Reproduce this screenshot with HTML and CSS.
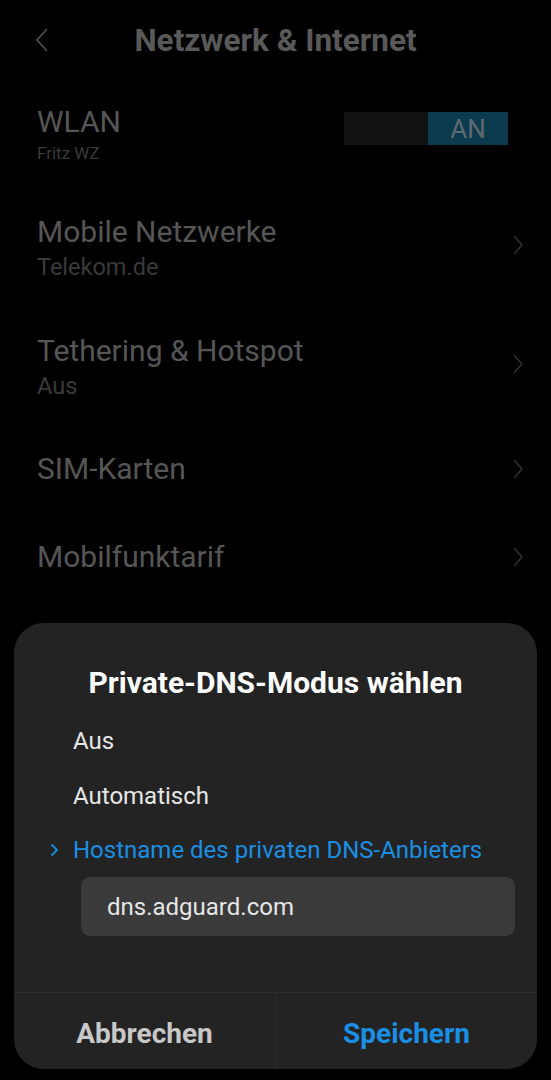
FILE: index.html
```html
<!DOCTYPE html>
<html>

<head>
    <title>Netzwerk &amp; Internet</title>
    <link rel="stylesheet" href="styles.css">
</head>

<body>
    <!-- Settings screen behind the dialog -->
    <header class="topbar">
        <svg class="back" width="14" height="24" viewBox="0 0 14 24">
            <path d="M12 1 L2 12 L12 23" fill="none" stroke="#555" stroke-width="1.6" />
        </svg>
        <h1 class="title">Netzwerk &amp; Internet</h1>
    </header>

    <ul class="settings">
        <li class="row row-wlan">
            <div class="labels">
                <span class="name">WLAN</span>
                <span class="sub small">Fritz WZ</span>
            </div>
            <div class="toggle">
                <span class="toggle-off"></span>
                <span class="toggle-on">AN</span>
            </div>
        </li>
        <li class="row row-mobile">
            <div class="labels">
                <span class="name">Mobile Netzwerke</span>
                <span class="sub">Telekom.de</span>
            </div>
            <svg class="chevron" width="10" height="20" viewBox="0 0 10 20">
                <path d="M1 1 L9 10 L1 19" fill="none" stroke="#333" stroke-width="1.4" />
            </svg>
        </li>
        <li class="row row-tether">
            <div class="labels">
                <span class="name">Tethering &amp; Hotspot</span>
                <span class="sub">Aus</span>
            </div>
            <svg class="chevron" width="10" height="20" viewBox="0 0 10 20">
                <path d="M1 1 L9 10 L1 19" fill="none" stroke="#333" stroke-width="1.4" />
            </svg>
        </li>
        <li class="row row-sim">
            <div class="labels">
                <span class="name">SIM-Karten</span>
            </div>
            <svg class="chevron" width="10" height="20" viewBox="0 0 10 20">
                <path d="M1 1 L9 10 L1 19" fill="none" stroke="#333" stroke-width="1.4" />
            </svg>
        </li>
        <li class="row row-tarif">
            <div class="labels">
                <span class="name">Mobilfunktarif</span>
            </div>
            <svg class="chevron" width="10" height="20" viewBox="0 0 10 20">
                <path d="M1 1 L9 10 L1 19" fill="none" stroke="#333" stroke-width="1.4" />
            </svg>
        </li>
    </ul>

    <!-- Bottom sheet dialog -->
    <div class="dialog">
        <h2 class="dialog-title">Private-DNS-Modus wählen</h2>
        <div class="options">
            <div class="option">Aus</div>
            <div class="option">Automatisch</div>
            <div class="option selected">
                <svg class="sel-mark" width="9" height="14" viewBox="0 0 9 14">
                    <path d="M1.5 1.5 L7 7 L1.5 12.5" fill="none" stroke="#1a8fe3" stroke-width="1.8" />
                </svg>
                Hostname des privaten DNS-Anbieters
            </div>
            <div class="host-input">dns.adguard.com</div>
        </div>
        <div class="actions">
            <button class="btn btn-cancel">Abbrechen</button>
            <button class="btn btn-save">Speichern</button>
        </div>
    </div>
</body>
</html>
```

FILE: styles.css
```css
html,
body {
    margin: 0;
    padding: 0;
}

body {
    width: 551px;
    height: 1080px;
    background: #000;
    font-family: Roboto, "Noto Sans", sans-serif;
    overflow: hidden;
    position: relative;
}

.topbar {
    height: 80px;
    display: flex;
    align-items: center;
    position: relative;
}

.back {
    position: absolute;
    left: 35px;
    top: 28px;
}

.title {
    margin: 0;
    width: 100%;
    text-align: center;
    font-size: 31.5px;
    font-weight: 700;
    color: #595959;
}

.settings {
    list-style: none;
    margin: 0;
    padding: 0;
}

.row {
    display: flex;
    align-items: center;
    justify-content: space-between;
    padding: 0 28px 0 37px;
}

.labels {
    display: flex;
    flex-direction: column;
}

.name {
    font-size: 30px;
    color: #565656;
    line-height: 36px;
}

.sub {
    font-size: 23.5px;
    color: #3a3a3a;
    line-height: 34px;
}

.sub.small {
    font-size: 17px;
    line-height: 26px;
}

.row-wlan {
    margin-top: 24px;
    padding-right: 43px;
    align-items: flex-start;
}

.row-mobile {
    margin-top: 48px;
}

.row-mobile .chevron,
.row-tether .chevron {
    margin-bottom: 8px;
}

.row-tether {
    margin-top: 49px;
}

.row-sim {
    margin-top: 48px;
}

.row-tarif {
    margin-top: 52px;
}

.toggle {
    display: flex;
    width: 164px;
    height: 33px;
    margin-top: 8px;
}

.toggle-off {
    flex: 0 0 84px;
    background: #121212;
}

.toggle-on {
    flex: 1;
    background: #0c3b4f;
    color: #5f6a70;
    font-size: 26px;
    display: flex;
    align-items: center;
    justify-content: center;
}

/* dialog sheet */
.dialog {
    position: absolute;
    left: 14px;
    top: 623px;
    width: 523px;
    height: 446px;
    background: #232324;
    border-radius: 30px;
    display: flex;
    flex-direction: column;
    overflow: hidden;
}

.dialog-title {
    margin: 44px 0 0;
    text-align: center;
    font-size: 30px;
    font-weight: 700;
    color: #fff;
    line-height: 32px;
}

.options {
    flex: 1;
    padding: 28px 22px 0 36px;
    display: flex;
    flex-direction: column;
}

.option {
    font-size: 24px;
    color: #e6e6e6;
    line-height: 28px;
    height: 54.5px;
    padding-left: 23px;
    position: relative;
    white-space: nowrap;
}

.option.selected {
    color: #1a8fe3;
    height: 27px;
}

.sel-mark {
    position: absolute;
    left: 0;
    top: 7px;
}

.host-input {
    margin: 14px 0 0 31px;
    height: 59px;
    border-radius: 9px;
    background: #3a3a3b;
    color: #e6e6e6;
    font-size: 24px;
    display: flex;
    align-items: center;
    padding-left: 26px;
}

.actions {
    display: flex;
    height: 76px;
    border-top: 1px solid #2e2e2f;
}

.btn {
    flex: 1;
    background: none;
    border: 0;
    font-family: inherit;
    font-size: 28px;
    font-weight: 700;
    padding: 4px 0 0;
}

.btn-cancel {
    color: #c8c8c8;
    border-right: 1px solid #2e2e2f;
}

.btn-save {
    color: #1a8fe3;
}
```
